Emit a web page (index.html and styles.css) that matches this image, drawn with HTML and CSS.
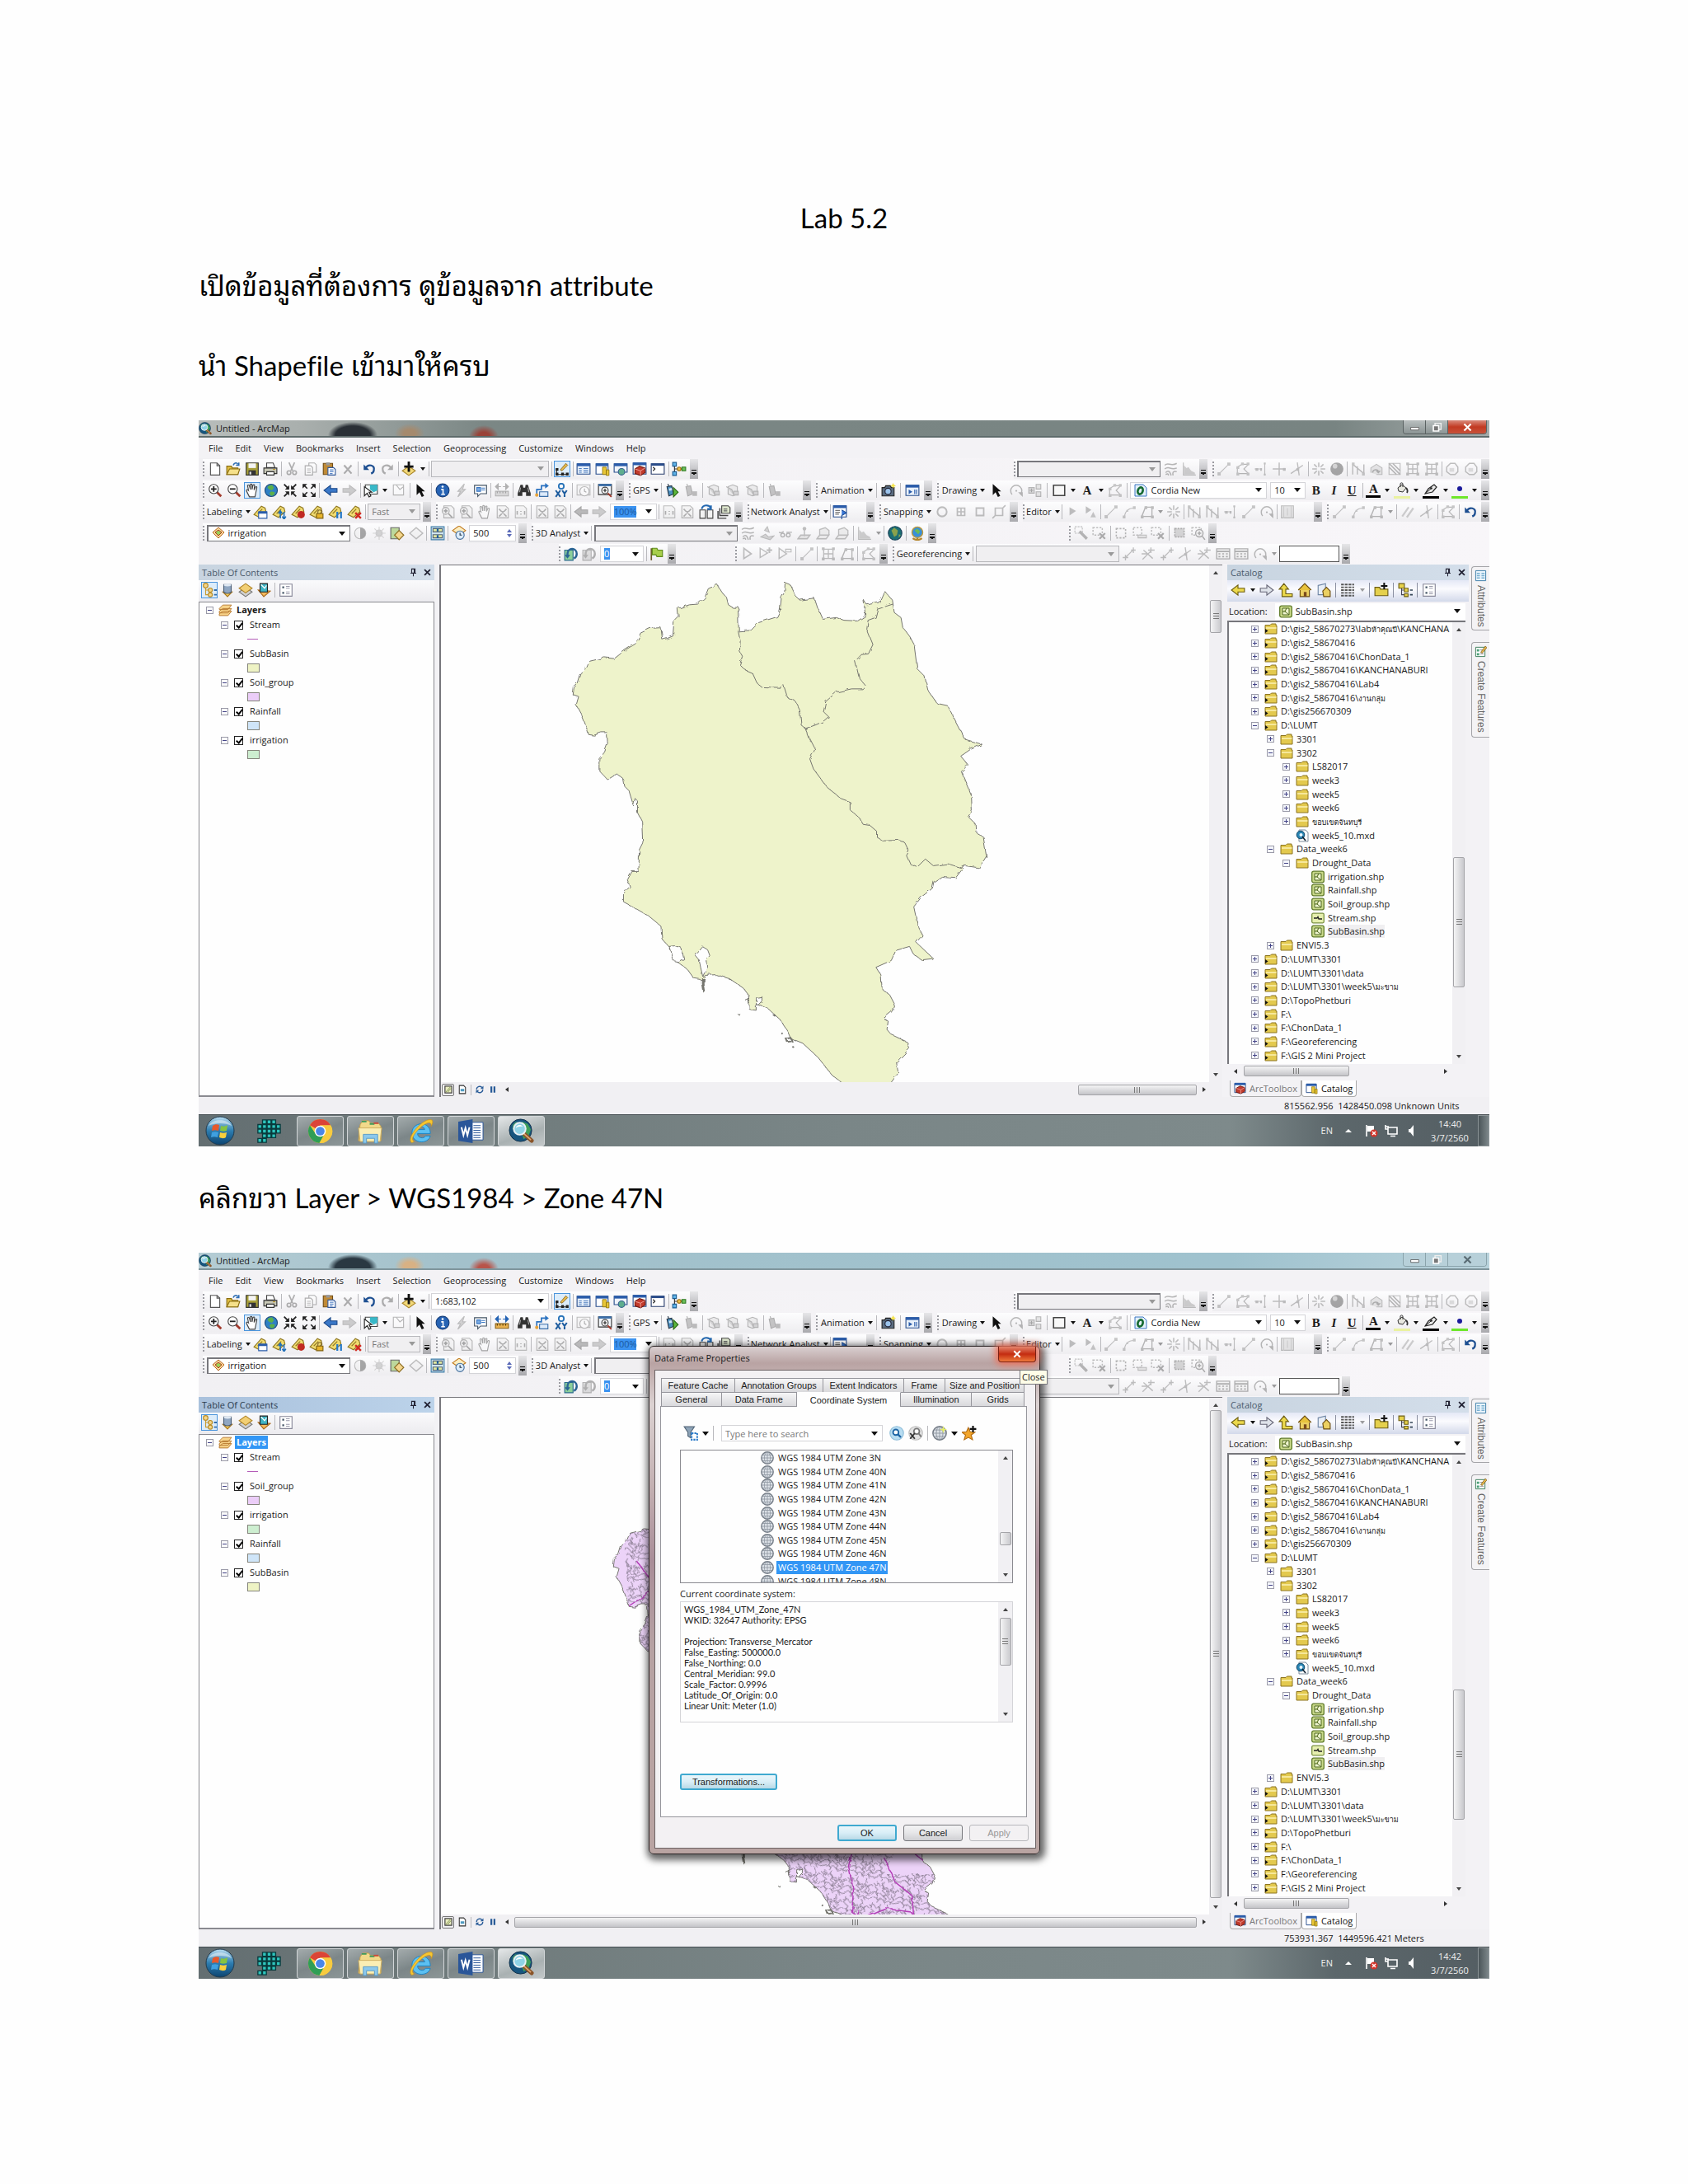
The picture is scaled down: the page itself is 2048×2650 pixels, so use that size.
FILE: index.html
```html
<!DOCTYPE html>
<html lang="th">
<head>
<meta charset="utf-8">
<title>Lab 5.2</title>
<link rel="stylesheet" href="styles.css">
</head>
<body>
<svg class="defs" aria-hidden="true">
<defs>
<filter id="rough" x="-5%" y="-5%" width="110%" height="110%"><feTurbulence type="fractalNoise" baseFrequency=".12" numOctaves="2" seed="4"/><feDisplacementMap in="SourceGraphic" scale="5"/></filter>
<linearGradient id="sky" x1="0" y1="0" x2="0" y2="1"><stop offset="0" stop-color="#b8dcf0"/><stop offset=".5" stop-color="#2d7db0"/><stop offset="1" stop-color="#0c4470"/></linearGradient>
<pattern id="soil" width="46" height="38" patternUnits="userSpaceOnUse" patternTransform="scale(.7) rotate(12)"><path d="M0 6l5 3 3-5 5 6 4-4 3 7 6-3 2 6 6-5 3 4 5-6 4 2M4 0l2 7-3 5 6 3-2 6 5 2-3 7 5 3-2 5M18 0l-2 6 5 4-4 6 6 3-2 7 6 2-3 6 2 4M32 0l3 8-5 3 6 6-3 5 6 4-5 6 3 6M0 22l6-2 4 5 5-4 7 5 3-5 6 6 5-4 4 4 6-4M0 32l8-3 5 4 6-3 7 5 6-4 8 3 6-2M40 10l-4 4 5 4-2 5M24 14l6 3-3 4z" fill="none" stroke="#85788c" stroke-width="1.300"/></pattern>
<path id="basin" d="M640 210L638 150 645 150 640 140 620 140 606 132 600 110 585 95 570 72 540 84 528 112 505 130 478 132 440 143 442 165 428 178 424 225 405 232 390 236 385 200 350 202 318 216 305 246 270 265 232 292 200 289 150 300 142 318 120 335 110 365 97 375 94 398 115 405 107 430 125 460 138 490 148 518 165 520 190 512 208 512 210 545 200 570 182 590 182 625 210 652 240 635 262 650 266 672 280 685 295 730 300 708 308 715 308 750 322 775 325 840 314 860 312 925 290 925 275 950 283 970 262 990 262 1015 300 1034 345 1058 385 1088 388 1125 410 1148 430 1188 470 1215 492 1243 520 1247 530 1234 565 1232 610 1244 655 1272 672 1292 675 1335 697 1338 697 1320 735 1332 775 1365 800 1400 810 1421 850 1436 900 1478 945 1530 985 1558 1000 1590 1100 1640 1180 1620 1140 1552 1163 1525 1157 1492 1200 1452 1192 1432 1140 1410 1126 1395 1130 1370 1115 1362 1142 1342 1150 1318 1135 1292 1110 1275 1107 1235 1090 1210 1140 1190 1155 1160 1200 1148 1212 1170 1240 1188 1278 1184 1222 1136 1242 1115 1228 1090 1214 1030 1240 1000 1275 975 1280 955 1305 940 1352 943 1382 908 1428 914 1452 880 1442 822 1420 810 1418 785 1392 762 1405 745 1403 700 1370 628 1392 608 1368 582 1400 562 1438 547 1382 532 1325 432 1290 425 1260 385 1250 345 1228 325 1218 255 1200 225 1178 200 1172 170 1150 155 1144 118 1117 90 1100 125 1060 132 1050 118 1055 165 1030 180 985 178 960 170 915 175 900 145 888 112 840 118 825 105 808 72 792 66 790 95 780 110 775 150 765 168 705 185 680 208Z"/>
<path id="basin-lines" d="M638 210L645 240 643 270 652 285 643 310 660 325 685 335 700 365 715 376 778 378 786 368 800 408 825 418 840 445 845 490 858 500M858 500L890 490 915 480 935 465 918 450 925 420 960 392 1010 382 1045 382 1055 372 1035 350 1022 300 1042 280 1065 278 1080 250 1060 205 1064 178 1088 170 1095 145 1145 130M858 500L872 530 890 562 873 590 885 620 930 675 975 708 1005 718 1005 742 1035 765 1048 785 1070 788 1092 805 1092 822 1112 834 1165 832 1185 840 1198 865 1190 878 1203 904 1225 912 1252 888 1278 908 1325 902 1370 914 1382 908"/>
<g id="coast"><path d="M412 1148L430 1146 452 1152 460 1185 440 1193 424 1190ZM522 1149L498 1175 510 1188 515 1210 522 1238 536 1210 533 1190 545 1175 538 1158ZM697 1320L698 1300 716 1297 716 1310 704 1322Z" fill="#fefefe"/><path d="M521 1240v18l4 24" stroke-width="3"/><path d="M638 1348l6 4M780 1406l4 2M796 1422l14-2 4 10-14 2ZM816 1446l4 2M662 1308l10-4 4 14M752 1350l8 5" stroke-width="2"/></g>
</defs>
<symbol id="i-new" viewBox="0 0 16 16"><path d="M3 1.5h7l3 3v10H3z" fill="#fff" stroke="#555"/><path d="M10 1.5v3h3" fill="none" stroke="#555"/></symbol>
<symbol id="i-open" viewBox="0 0 16 16"><path d="M1 14V5h5l1 2h6v7z" fill="#e2c044" stroke="#8a6d10"/><path d="M1 14l3-6h11l-2 6z" fill="#f5e08a" stroke="#8a6d10"/><path d="M8 4c1-3 4-3 5-1M14 1v3h-3" fill="none" stroke="#2c6db4" stroke-width="1.4"/></symbol>
<symbol id="i-save" viewBox="0 0 16 16"><path d="M1.500 1.500h13v13h-13z" fill="#a8a03a" stroke="#333"/><path d="M4 2h8v5H4z" fill="#f4f4f4"/><path d="M4 9.500h8v5H4z" fill="#333"/><path d="M5 11h2v3H5z" fill="#ddd"/></symbol>
<symbol id="i-print" viewBox="0 0 16 16"><path d="M4 1.500h7l2 5H4z" fill="#fff" stroke="#444"/><path d="M1 7h14v6H1z" fill="#c9c9b8" stroke="#333"/><path d="M4 11h8v3.500H4z" fill="#fff" stroke="#333"/><path d="M11 8.500h2" stroke="#b80"/></symbol>
<symbol id="i-cut" viewBox="0 0 16 16"><path d="M5 1l4 9M11 1L7 10" stroke="#555" stroke-width="1.500" fill="none"/><circle cx="5" cy="12" r="2" fill="none" stroke="#555" stroke-width="1.500"/><circle cx="11" cy="12" r="2" fill="none" stroke="#555" stroke-width="1.500"/></symbol>
<symbol id="i-copy" viewBox="0 0 16 16"><path d="M6 1.500h6l2 2v8H6z" fill="#fff" stroke="#555"/><path d="M2 4.500h6l2 2v8H2z" fill="#fff" stroke="#555"/><path d="M4 8h4M4 10h4M4 12h4" stroke="#777"/></symbol>
<symbol id="i-paste" viewBox="0 0 16 16"><path d="M2 2h10v12H2z" fill="#c08a35" stroke="#704c14"/><path d="M5 1h4v3H5z" fill="#999"/><path d="M7 6.500h6l2 2v6H7z" fill="#fff" stroke="#345a9a"/><path d="M9 9h4M9 11h4M9 13h3" stroke="#5a86c8"/></symbol>
<symbol id="i-del" viewBox="0 0 16 16"><path d="M4 4l8 9M12 4l-8 9" stroke="#555" stroke-width="2"/></symbol>
<symbol id="i-undo" viewBox="0 0 16 16"><path d="M4 7c3-5 10-3 9 2 0 2-1 3-3 4" fill="none" stroke="#1d4f91" stroke-width="2"/><path d="M2 3v6h6z" fill="#1d4f91"/></symbol>
<symbol id="i-redo" viewBox="0 0 16 16"><path d="M12 7C9 2 2 4 3 9c0 2 1 3 3 4" fill="none" stroke="#555" stroke-width="2"/><path d="M14 3v6H8z" fill="#555"/></symbol>
<symbol id="i-add" viewBox="0 0 16 16"><path d="M8 5l7 5-7 5-7-5z" fill="#f2d878" stroke="#a8852a"/><path d="M8 0v11M3 5.500h10" stroke="#111" stroke-width="2.500"/></symbol>
<symbol id="i-pencil" viewBox="0 0 16 16"><path d="M2 8v6h12" fill="none" stroke="#222"/><path d="M1 7h3v3H1zM1 12h3v3H1zM7 12h3v3H7zM12 12h3v3h-3z" fill="#222"/><path d="M6 9L12 2l2 2-6 6z" fill="#e6b94c" stroke="#7a5a14" stroke-width=".7"/></symbol>
<symbol id="i-tbl" viewBox="0 0 16 16"><path d="M1 2.500h14v11H1z" fill="#e6effa" stroke="#2a4f8d"/><path d="M1 2h14v3H1z" fill="#2a5caa"/><path d="M3 7.500h3M8 7.500h5M3 9.500h3M8 9.500h5M3 11.500h3M8 11.500h5" stroke="#4f7fc0"/></symbol>
<symbol id="i-cat" viewBox="0 0 16 16"><path d="M1 2.500h13v11H1z" fill="#fff" stroke="#2a4f8d"/><path d="M1 2h13v3H1z" fill="#2a5caa"/><path d="M8 6h4v8H8zM12 9h3v6h-3z" fill="#e8c637" stroke="#8a7008" stroke-width=".7"/></symbol>
<symbol id="i-srch" viewBox="0 0 16 16"><path d="M1 2.500h14v9H1z" fill="#f0f4fa" stroke="#2a4f8d"/><path d="M1 2h14v3H1z" fill="#2a5caa"/><circle cx="9" cy="11" r="3.500" fill="#5fae8e" stroke="#35618e"/></symbol>
<symbol id="i-tbx" viewBox="0 0 16 16"><path d="M1 1.500h14v12H1z" fill="#fff" stroke="#2a4f8d"/><path d="M1 1h14v3H1z" fill="#2a5caa"/><path d="M3 8l5-3 6 2v5l-5 3-6-2z" fill="#c23a2c" stroke="#701a12"/><path d="M3 8l6 2 5-3M9 10v5" fill="none" stroke="#f3a79f" stroke-width=".8"/></symbol>
<symbol id="i-py" viewBox="0 0 16 16"><path d="M1 2.500h14v11H1z" fill="#fff" stroke="#2a3f6d"/><path d="M1 2h14v2.500H1z" fill="#2a4c8a"/><path d="M3 6l2 2-2 2" fill="none" stroke="#222"/></symbol>
<symbol id="i-model" viewBox="0 0 16 16"><path d="M3 3v10M3 8h10" stroke="#333"/><path d="M1 1h4v4H1zM1 11h4v4H1z" fill="#5fb3e8" stroke="#1d5f93"/><circle cx="8" cy="8" r="2" fill="#f0c24b" stroke="#9a6c0c"/><path d="M11 6h4v4h-4z" fill="#6cc05a" stroke="#2f7a22"/></symbol>
<symbol id="i-zin" viewBox="0 0 16 16"><path d="M10 10l4.500 4.500" stroke="#a23a2c" stroke-width="2.500"/><circle cx="6.500" cy="6.500" r="5" fill="#fff" stroke="#444"/><path d="M6.500 3.500v6M3.500 6.500h6" stroke="#222" stroke-width="1.600"/></symbol>
<symbol id="i-zout" viewBox="0 0 16 16"><path d="M10 10l4.500 4.500" stroke="#a23a2c" stroke-width="2.500"/><circle cx="6.500" cy="6.500" r="5" fill="#fff" stroke="#444"/><path d="M3.500 6.500h6" stroke="#222" stroke-width="1.600"/></symbol>
<symbol id="i-hand" viewBox="0 0 16 16"><path d="M5 15L2 9c-1-2 1-2 2-1L3 3c0-1 1.500-1 2 0l1 4V2c0-1 1.600-1 1.800 0v5l1-4.500c.3-1 1.800-1 1.700 0L10 7.500l1.500-3c.6-1 1.700-.3 1.500.5L12 10l-1 5z" fill="#fff" stroke="#444"/></symbol>
<symbol id="i-globe" viewBox="0 0 16 16"><circle cx="8" cy="8" r="6.700" fill="#2f7fc4" stroke="#1c4a7c"/><path d="M5 3l4-1 2 3-2 3-3-1-2-2zM8 9l4 1-1 3-3 1-2-3z" fill="#5cb04a"/></symbol>
<symbol id="i-fin" viewBox="0 0 16 16"><path d="M7 7V2.500L2.500 7zM9 7V2.500L13.500 7zM7 9v4.500L2.500 9zM9 9v4.500L13.500 9z" fill="#222"/><path d="M1.500 1.500l4 4M14.500 1.500l-4 4M1.500 14.500l4-4M14.500 14.500l-4-4" stroke="#222" stroke-width="1.600"/></symbol>
<symbol id="i-fout" viewBox="0 0 16 16"><path d="M1 1h5L1 6zM15 1h-5l5 5zM1 15h5l-5-5zM15 15h-5l5-5z" fill="#222"/><path d="M2 2l4 4M14 2l-4 4M2 14l4-4M14 14l-4-4" stroke="#222" stroke-width="1.400"/></symbol>
<symbol id="i-back" viewBox="0 0 16 16"><path d="M1 8l7-5.500V6h7v4H8v3.500z" fill="#3a78c8" stroke="#1d4a8a"/></symbol>
<symbol id="i-fwd" viewBox="0 0 16 16"><path d="M15 8L8 2.500V6H1v4h7v3.500z" fill="#999" stroke="#777"/></symbol>
<symbol id="i-sel" viewBox="0 0 16 16"><path d="M2 2h13v10H2z" fill="#f4fafa" stroke="#444"/><path d="M7 2h8v6l-4 2-4-3z" fill="#38b8c8"/><path d="M1 4v10l3-3 2 4 2-1-2-4h3z" fill="#fff" stroke="#222"/></symbol>
<symbol id="i-clr" viewBox="0 0 16 16"><path d="M2 2h11v11H2z" fill="#fff" stroke="#666"/><path d="M5 2l4 5 4-3" fill="none" stroke="#666"/></symbol>
<symbol id="i-ptr" viewBox="0 0 16 16"><path d="M4 1v12l3-3 2.500 5 2.500-1-2.500-5H13z" fill="#111"/></symbol>
<symbol id="i-info" viewBox="0 0 16 16"><circle cx="8" cy="8" r="7" fill="#2663b4" stroke="#163f7c"/><path d="M6.500 7h2v5M6.500 12.200h4" stroke="#fff" stroke-width="1.400" fill="none"/><circle cx="8" cy="4" r="1.200" fill="#fff"/></symbol>
<symbol id="i-bolt" viewBox="0 0 16 16"><path d="M11 1L4 9h3l-3 6 8-8H9z" fill="#aaa" stroke="#777"/></symbol>
<symbol id="i-html" viewBox="0 0 16 16"><path d="M1.500 2.500h13v9H8l-3 3v-3H1.500z" fill="#fff" stroke="#456"/><path d="M4 5h4v4H4zM9 5.500h4M9 7.500h4" fill="#7faee4" stroke="#3b77c2"/></symbol>
<symbol id="i-meas" viewBox="0 0 16 16"><path d="M1 9h14v5H1z" fill="#e9b250" stroke="#8c6010"/><path d="M3 9v2M6 9v2M9 9v2M12 9v2" stroke="#553b08"/><path d="M1 4l3-3v6zM15 4l-3-3v6zM4 4h3M9 4h3" fill="#2463b4" stroke="#2463b4"/></symbol>
<symbol id="i-bino" viewBox="0 0 16 16"><path d="M4 2h2.500l.5 3h2l.5-3H12l3 9v3h-5v-4H6v4H1v-3z" fill="#333"/><path d="M4 5l-1 5M12 5l1 5" stroke="#aaa"/></symbol>
<symbol id="i-route" viewBox="0 0 16 16"><path d="M2 12V7h5V3h6" fill="none" stroke="#2b72c0" stroke-width="1.500"/><path d="M11 0l4 3-4 3z" fill="#2b72c0"/><path d="M5 9.500h9v5H5z" fill="#dceafa" stroke="#3b6ea8"/><circle cx="2" cy="13" r="1.800" fill="#e5a23a"/></symbol>
<symbol id="i-xy" viewBox="0 0 16 16"><circle cx="8" cy="3.500" r="2.800" fill="none" stroke="#2672b8" stroke-width="1.600"/><path d="M2 8l5 7M7 8l-5 7M9 8l2.500 3.500L14 8M11.500 11v4" fill="none" stroke="#1d5c9e" stroke-width="1.800"/></symbol>
<symbol id="i-time" viewBox="0 0 16 16"><path d="M1 2h14v11H1z" fill="#eee" stroke="#777"/><circle cx="9" cy="9" r="5" fill="#fff" stroke="#666"/><path d="M9 6v3l2 1" stroke="#555" fill="none"/></symbol>
<symbol id="i-viewer" viewBox="0 0 16 16"><path d="M1 1.500h14v11H1z" fill="#f4f8fc" stroke="#333"/><path d="M1 1h14v2.500H1z" fill="#3b6ea8"/><circle cx="8" cy="8" r="3.500" fill="#fff" stroke="#444"/><path d="M8 6v4M6 8h4" stroke="#222"/><path d="M11 11l4 4" stroke="#a23a2c" stroke-width="1.800"/></symbol>
<symbol id="i-gps" viewBox="0 0 16 16"><path d="M3 1l1 3M2 4l5-1 2 9-5 2z" fill="#4b8fc0" stroke="#234"/><path d="M4 6l3-.6.5 2.500-3 .6z" fill="#cfe8f6"/><path d="M9 5l5 5-5 5z" fill="#5db83c" stroke="#2b6a14"/></symbol>
<symbol id="i-gps2" viewBox="0 0 16 16"><path d="M3 1l1 3M2 4l5-1 2 9-5 2z" fill="#888" stroke="#555"/><path d="M9 9h5v5H9z" fill="#777"/></symbol>
<symbol id="i-box" viewBox="0 0 16 16"><path d="M3 4l5-2 5 2v8l-5 2-5-2z" fill="#ddd" stroke="#666"/><path d="M1 4l6 3 2 6M9 9h5v4H9z" fill="#aaa" stroke="#666"/></symbol>
<symbol id="i-cam" viewBox="0 0 16 16"><path d="M1 5h3l1-2h5l1 2h3v9H1z" fill="#5a6c80" stroke="#222"/><circle cx="7.500" cy="9" r="3.300" fill="#9cc4ec" stroke="#223"/><path d="M13 0l1 2 2 1-2 1-1 2-1-2-2-1 2-1z" fill="#f3e34a"/></symbol>
<symbol id="i-anim" viewBox="0 0 16 16"><path d="M1 2.500h14v11H1z" fill="#e9f1fa" stroke="#2a4f8d"/><path d="M1 2h14v3H1z" fill="#2a5caa"/><path d="M4 7l4 2.500L4 12zM10 7h1v5h-1zM12 7h1v5h-1z" fill="#2a5caa"/></symbol>
<symbol id="i-rot" viewBox="0 0 16 16"><path d="M3.500 12.500a6 6 0 1 1 9 0" fill="none" stroke="#666" stroke-width="1.300"/><path d="M10 10h5v5z" fill="#666"/><circle cx="8" cy="8.500" r="1" fill="#666"/></symbol>
<symbol id="i-group" viewBox="0 0 16 16"><path d="M1 5h6v6H1z" fill="#bbb" stroke="#666"/><path d="M9 1.500h5v5H9zM9 9.500h5v5H9z" fill="#ccc" stroke="#666"/><path d="M2 8h4M4 6v4" stroke="#444"/></symbol>
<symbol id="i-rect" viewBox="0 0 16 16"><path d="M2 2.500h12v11H2z" fill="#f8f8f8" stroke="#444" stroke-width="1.400"/></symbol>
<symbol id="i-poly" viewBox="0 0 16 16"><path d="M2 13l4-10h7v10z" fill="none" stroke="#666" stroke-width="1.200"/><path d="M1 12h3v3H1zM5 2h3v3H5zM12 2h3v3h-3zM12 12h3v3h-3z" fill="#777"/></symbol>
<symbol id="i-nodes" viewBox="0 0 16 16"><path d="M2 13V6l5-3h7l-5 5 5 5z" fill="none" stroke="#666"/><path d="M1 5h3v3H1zM6 1h3v3H6zM12 1h3v3h-3zM1 12h3v3H1zM12 12h3v3h-3z" fill="#888"/></symbol>
<symbol id="i-font" viewBox="0 0 16 16"><path d="M1 1h10l4 4v10H1z" fill="#e4f0fa" stroke="#3b77c2"/><ellipse cx="7.500" cy="8.500" rx="3" ry="4.200" transform="rotate(20 7.500 8.500)" fill="none" stroke="#156a30" stroke-width="2.600"/></symbol>
<symbol id="i-tag" viewBox="0 0 16 16"><path d="M1 11l8-9 4 2 1 4-7 6z" fill="#f1dc72" stroke="#8f7722"/><path d="M5 10l5-5" stroke="#8f7722"/></symbol>
<symbol id="i-tag1" viewBox="0 0 16 16"><use href="#i-tag"/><path d="M6 8h9v7H6z" fill="#fff" stroke="#2a5caa"/><path d="M6 7.500h9V10H6z" fill="#2a5caa"/></symbol>
<symbol id="i-tag2" viewBox="0 0 16 16"><use href="#i-tag"/><path d="M9 15V8M7 10l2-3 2 3M13 8v7M11 13l2 3 2-3" stroke="#2270b8" stroke-width="1.400" fill="none"/></symbol>
<symbol id="i-tag3" viewBox="0 0 16 16"><use href="#i-tag"/><circle cx="11" cy="11" r="4" fill="#c02a22"/></symbol>
<symbol id="i-tag4" viewBox="0 0 16 16"><use href="#i-tag"/><path d="M8 10h7v5H8z" fill="#e8b52c" stroke="#80600c"/><path d="M9.500 10V8a2 2 0 0 1 4 0v2" fill="none" stroke="#806830"/></symbol>
<symbol id="i-tag5" viewBox="0 0 16 16"><use href="#i-tag"/><path d="M9 8h2v7H9zM13 8h2v7h-2z" fill="#2478c8"/></symbol>
<symbol id="i-tag6" viewBox="0 0 16 16"><use href="#i-tag"/><path d="M9 9l6 6M15 9l-6 6" stroke="#d22a20" stroke-width="2.200"/></symbol>
<symbol id="i-page" viewBox="0 0 16 16"><path d="M4 1.500h8l3 3v10H4z" fill="#eee" stroke="#666"/><circle cx="6" cy="7" r="3.800" fill="#ddd" stroke="#555"/><path d="M4 7h4M6 5v4M9 10l4 4" stroke="#444" stroke-width="1.500"/></symbol>
<symbol id="i-page2" viewBox="0 0 16 16"><path d="M2 1.500h9l3 3v10H2z" fill="#eee" stroke="#666"/><path d="M4 5l3 3M12 5L9 8M4 13l3-3M12 13l-3-3M8 7v3" stroke="#555" stroke-width="1.400"/></symbol>
<symbol id="i-page3" viewBox="0 0 16 16"><path d="M2 1.500h9l3 3v10H2z" fill="#eee" stroke="#777"/><path d="M4 7v4M12 7v4M8 7v1M8 10v1" stroke="#555" stroke-width="1.400"/></symbol>
<symbol id="i-swap" viewBox="0 0 16 16"><path d="M1 6h6v9H1zM9 6h6v9H9z" fill="#f2f2f2" stroke="#444"/><path d="M3 5c1-5 8-5 10-1M13 1v4h-4" fill="none" stroke="#2468b0" stroke-width="1.800"/></symbol>
<symbol id="i-stack" viewBox="0 0 16 16"><path d="M5 1.500h7l2 2v6H5z" fill="#dfe8cf" stroke="#444"/><path d="M3 4v8h9M1 7v8h9" fill="none" stroke="#444" stroke-width="1.300"/><path d="M7 5h4M7 7h4" stroke="#666"/></symbol>
<symbol id="i-na" viewBox="0 0 16 16"><path d="M1 1.500h14v12H1z" fill="#fff" stroke="#2a4f8d"/><path d="M1 1h14v3H1z" fill="#2a5caa"/><path d="M3 6.500h5M3 8.500h5M3 10.500h4" stroke="#777"/><path d="M10 6l5 3-5 3v4" fill="#3a78d8" stroke="#1d4f9a"/></symbol>
<symbol id="i-circ" viewBox="0 0 16 16"><circle cx="8" cy="8" r="5" fill="none" stroke="#777" stroke-width="1.800"/></symbol>
<symbol id="i-plusbox" viewBox="0 0 16 16"><path d="M4 4h8v8H4zM8 4v8M4 8h8" fill="none" stroke="#777" stroke-width="1.500"/></symbol>
<symbol id="i-sq" viewBox="0 0 16 16"><path d="M4 4h8v8H4z" fill="none" stroke="#777" stroke-width="1.600"/></symbol>
<symbol id="i-edge" viewBox="0 0 16 16"><path d="M4 4h8v8H4zM1 15l3-3M12 4l3-3" fill="none" stroke="#777" stroke-width="1.500"/></symbol>
<symbol id="i-play" viewBox="0 0 16 16"><path d="M5 3v9l7-5z" fill="#777"/></symbol>
<symbol id="i-play2" viewBox="0 0 16 16"><path d="M3 2v8l6-4z" fill="#777"/><path d="M8 14l3-6 3 6z" fill="#888"/></symbol>
<symbol id="i-line" viewBox="0 0 16 16"><path d="M3 13L13 3" stroke="#777"/><path d="M1 11.500h3.500V15H1zM11.500 1H15v3.500h-3.500z" fill="#888"/></symbol>
<symbol id="i-arc" viewBox="0 0 16 16"><path d="M3 14C3 8 7 4 13 4" fill="none" stroke="#777"/><path d="M1 12h3v3H1zM12 2h3v3h-3zM5 6h2v2H5z" fill="#888"/></symbol>
<symbol id="i-mid" viewBox="0 0 16 16"><path d="M1 8h8M12 2v12" stroke="#777"/><path d="M2 7h3v3H2zM7 7h2v3H7zM11 1h2v2h-2zM11 13h2v2h-2z" fill="#777"/></symbol>
<symbol id="i-cross" viewBox="0 0 16 16"><path d="M8 1v14M1 8h14" stroke="#777" stroke-width="1.300"/><path d="M12 7h3v3h-3z" fill="#777"/></symbol>
<symbol id="i-tan" viewBox="0 0 16 16"><path d="M1 13L14 4M8 1l2 14" stroke="#777" stroke-width="1.200"/><path d="M7 7h3v3H7z" fill="#777"/></symbol>
<symbol id="i-spark" viewBox="0 0 16 16"><path d="M8 1v5M8 10v5M1 8h5M10 8h5M3 3l3 3M13 3l-3 3M3 13l3-3M13 13l-3-3" stroke="#777" stroke-width="1.400"/></symbol>
<symbol id="i-ball" viewBox="0 0 16 16"><circle cx="8" cy="8" r="7" fill="#444"/><circle cx="6" cy="5" r="2.500" fill="#aaa"/></symbol>
<symbol id="i-split" viewBox="0 0 16 16"><path d="M2 3v11M2 3l12 10M7 5v9M14 3v10" stroke="#777" fill="none" stroke-width="1.300"/><path d="M1 1h3v3H1zM12 12h3v3h-3z" fill="#888"/></symbol>
<symbol id="i-frames" viewBox="0 0 16 16"><path d="M3 3h10v10H3zM3 8h10M8 3v10" fill="none" stroke="#777" stroke-width="1.200"/><path d="M1 1h3v3H1zM12 1h3v3h-3zM1 12h3v3H1zM12 12h3v3h-3z" fill="#777"/></symbol>
<symbol id="i-flip" viewBox="0 0 16 16"><path d="M2 12V7l6-4 6 4v7H8" fill="#ccc" stroke="#777"/><path d="M4 12c0-4 6-4 6-1M8 10l2 2 2-2" fill="none" stroke="#555" stroke-width="1.400"/></symbol>
<symbol id="i-hatch" viewBox="0 0 16 16"><path d="M2 2h12v12H2z" fill="none" stroke="#777"/><path d="M2 6l8 8M2 2l12 12M6 2l8 8" stroke="#666" stroke-width="1.500"/></symbol>
<symbol id="i-hex" viewBox="0 0 16 16"><path d="M2 6l4-4h5l3 4v5l-3 3H6l-4-3z" fill="none" stroke="#777" stroke-width="1.300"/><path d="M5 7h5v4H5z" fill="#bbb"/></symbol>
<symbol id="i-sheet" viewBox="0 0 16 16"><path d="M1.500 1.500h13v13h-13z" fill="#ccc" stroke="#777"/><path d="M4 1v14M8 4v8M12 1v14" stroke="#999"/></symbol>
<symbol id="i-contour" viewBox="0 0 16 16"><path d="M1 4c4-4 6 2 13-2M1 8c5-4 6 2 13-1M2 12c4-4 5 1 6 3M10 15c-1-4 1-5 4-4M5 15c0-2-1-2-3-1" fill="none" stroke="#666" stroke-width="1.300"/></symbol>
<symbol id="i-hist" viewBox="0 0 16 16"><path d="M1.500 1v13.500H15" fill="none" stroke="#777"/><path d="M2 14V4l3 3 2-1 3 4 4 2v2z" fill="#999"/></symbol>
<symbol id="i-slope" viewBox="0 0 16 16"><path d="M1 12l5-3 3 3 6-1-4 4zM8 1l-3 4 5 2z" fill="#aaa" stroke="#777"/></symbol>
<symbol id="i-glass" viewBox="0 0 16 16"><path d="M1 7c2 1 3 1 5-1M15 7H9" stroke="#666" fill="none"/><circle cx="5" cy="10" r="2" fill="none" stroke="#666" stroke-width="1.300"/><circle cx="11" cy="10" r="2" fill="none" stroke="#666" stroke-width="1.300"/></symbol>
<symbol id="i-pin3" viewBox="0 0 16 16"><path d="M1 14l3-4h10l-3 4zM8 2v9" fill="#ccc" stroke="#777" stroke-width="1.300"/><circle cx="8" cy="3" r="2" fill="#777"/></symbol>
<symbol id="i-poly3" viewBox="0 0 16 16"><path d="M1 14l3-4h10l-3 4zM4 10V4l6-2 4 3v5" fill="#ddd" stroke="#777" stroke-width="1.200"/></symbol>
<symbol id="i-earth" viewBox="0 0 16 16"><circle cx="8" cy="8" r="7.300" fill="#1d6f74" stroke="#123c54"/><path d="M4 5l3-3 4 3-1 5-3 2zM12 9l2 1-2 3z" fill="#8aa24c"/></symbol>
<symbol id="i-earth2" viewBox="0 0 16 16"><path d="M3 13.500c3 2 7 2 10 0M8 13v2" fill="none" stroke="#b5852a" stroke-width="2"/><circle cx="8" cy="7" r="5.800" fill="#3a8fd8" stroke="#c09a3a" stroke-width="1.200"/><path d="M5 5l3-2 3 3-2 3z" fill="#6cbb56"/></symbol>
<symbol id="i-wrench" viewBox="0 0 16 16"><path d="M1 1h8v7H1z" fill="none" stroke="#777" stroke-dasharray="2 1"/><path d="M6 6l8 8" stroke="#666" stroke-width="3"/></symbol>
<symbol id="i-dash" viewBox="0 0 16 16"><path d="M3 3h10v10H3z" fill="none" stroke="#666" stroke-width="1.400" stroke-dasharray="2 1.500"/></symbol>
<symbol id="i-dashx" viewBox="0 0 16 16"><path d="M1 2h10v8H1z" fill="none" stroke="#777" stroke-width="1.300" stroke-dasharray="2 1.500"/><path d="M8 8l6 6M14 8l-6 6" stroke="#555" stroke-width="2"/></symbol>
<symbol id="i-dashm" viewBox="0 0 16 16"><path d="M1 2h9v8H1z" fill="none" stroke="#777" stroke-width="1.300" stroke-dasharray="2 1.500"/><path d="M6 10h9v3H6z" fill="#ccc" stroke="#777"/></symbol>
<symbol id="i-dashf" viewBox="0 0 16 16"><path d="M3 3h10v9H3z" fill="#aaa" stroke="#555" stroke-width="1.400" stroke-dasharray="2 1"/></symbol>
<symbol id="i-dashz" viewBox="0 0 16 16"><path d="M1 2h10v8H1z" fill="none" stroke="#777" stroke-width="1.300" stroke-dasharray="2 1.500"/><circle cx="9" cy="8" r="4" fill="#eee" stroke="#555" stroke-width="1.300"/><path d="M9 6v4M7 8h4M12 11l3 4" stroke="#555" stroke-width="1.400"/></symbol>
<symbol id="i-addpt" viewBox="0 0 16 16"><path d="M4 12l9-9M1 12h6M4 9v6M10 4h5M12.500 1v6" stroke="#777" stroke-width="1.200"/></symbol>
<symbol id="i-wand" viewBox="0 0 16 16"><path d="M2 14l9-9M3 4l10 9M1 8h7M11 1v6M8 4h7" stroke="#777" stroke-width="1.200"/></symbol>
<symbol id="i-tab" viewBox="0 0 16 16"><path d="M1 2.500h14v11H1z" fill="#eee" stroke="#555" stroke-width="1.200"/><path d="M1 5.500h14M3 8h2M7 8h2M11 8h2M3 11h2M7 11h2M11 11h2" stroke="#555" stroke-width="1.500"/></symbol>
<symbol id="i-cont" viewBox="0 0 16 16"><circle cx="8" cy="8" r="6" fill="#eee" stroke="#777"/><path d="M8 2a6 6 0 0 1 0 12z" fill="#444"/></symbol>
<symbol id="i-sun" viewBox="0 0 16 16"><circle cx="8" cy="8" r="4" fill="#999"/><path d="M8 1v14M1 8h14M3 3l10 10M13 3L3 13" stroke="#aaa"/></symbol>
<symbol id="i-swipe" viewBox="0 0 16 16"><path d="M1 2h9v12H1z" fill="#bcd89c" stroke="#666"/><path d="M10 5l5 5-5 5-5-5z" fill="#f3d58c" stroke="#8c6c20"/></symbol>
<symbol id="i-dia" viewBox="0 0 16 16"><path d="M8 2l7 6-7 6-7-6z" fill="#eee" stroke="#777" stroke-width="1.300"/></symbol>
<symbol id="i-lay" viewBox="0 0 16 16"><path d="M8 1l7 6-7 7-7-7z" fill="#f7e0a0" stroke="#b8601c"/><path d="M8 4l4 3-4 4-4-4z" fill="#9ccf58" stroke="#b8321c"/></symbol>
<symbol id="i-flick" viewBox="0 0 16 16"><path d="M1 1h14v14H1z" fill="#cfe6f0" stroke="#3f7da8"/><path d="M3 3h10v3.500H3zM3 9.500h10V13H3z" fill="#dfe7a0" stroke="#567"/><path d="M8 3v3M8 10v3" stroke="#1d5c9e" stroke-width="2"/></symbol>
<symbol id="i-timer" viewBox="0 0 16 16"><path d="M8 0l7 5-7 5-7-5z" fill="#fdeec0" stroke="#c07a20"/><circle cx="9" cy="10" r="4.500" fill="#dcecfa" stroke="#456f9c"/><path d="M9 7.500V10h2" fill="none" stroke="#234"/></symbol>
<symbol id="i-tree" viewBox="0 0 16 16"><path d="M4 4v9h4M4 8h4" fill="none" stroke="#c89b30"/><circle cx="4" cy="3" r="2.500" fill="#f3d58c" stroke="#b88a20"/><circle cx="9" cy="8" r="2.200" fill="#f3d58c" stroke="#b88a20"/><circle cx="9" cy="13" r="2.200" fill="#f3d58c" stroke="#b88a20"/><path d="M13 8h3M13 13h3" stroke="#346ca8" stroke-width="1.600"/></symbol>
<symbol id="i-src" viewBox="0 0 16 16"><path d="M3 10l5 5 5-5z" fill="#f2c95c" stroke="#a8761c"/><path d="M4 2h8v8c-2 2-6 2-8 0z" fill="#8fa6c2" stroke="#4a5c74"/><ellipse cx="8" cy="2.500" rx="4" ry="1.500" fill="#dfe8f2"/></symbol>
<symbol id="i-bucket" viewBox="0 0 16 16"><path d="M3 7l5-4 5 4-4 5-5-1z" fill="#e8e8e0" stroke="#333"/><path d="M6 6V2c0-1.500 3-1.500 3 0v4" fill="none" stroke="#333"/><path d="M13 7c2 2 2 4 1 6" fill="none" stroke="#333" stroke-width="1.800"/></symbol>
<symbol id="i-nib" viewBox="0 0 16 16"><path d="M1 14l4-6 7-5 3 3-5 6z" fill="#e8e8e8" stroke="#222" stroke-width="1.200"/><path d="M1 14l7-6" stroke="#222"/><circle cx="8.500" cy="7.500" r="1.300" fill="#222"/></symbol>
<symbol id="i-vis" viewBox="0 0 16 16"><path d="M8 5l7 5-7 5-7-5z" fill="#d0d0d0" stroke="#777"/><path d="M8 1l7 5-7 5-7-5z" fill="#f2cf74" stroke="#b08426"/></symbol>
<symbol id="i-selv" viewBox="0 0 16 16"><path d="M2 8l6 7 7-6z" fill="#f2b85c" stroke="#a86a1c"/><path d="M4 1h8v9H4z" fill="#3fb4c4" stroke="#222"/><path d="M5 2l4 4 2-3" stroke="#fff" fill="none"/></symbol>
<symbol id="i-opts" viewBox="0 0 16 16"><path d="M1.500 1.500h13v13h-13z" fill="#fff" stroke="#889"/><path d="M4 5h2M4 11h2" stroke="#456" stroke-width="2"/><path d="M8 4h4M8 6h4M8 10h4M8 12h4" stroke="#99a"/></symbol>
<symbol id="i-layers" viewBox="0 0 16 16"><path d="M1 12l4-3h10l-4 5H1zM1 9l4-3h10l-4 5H1zM1 6l4-4h10l-4 5H1z" fill="#f8d48a" stroke="#b87a30" stroke-width=".9"/></symbol>
<symbol id="i-yback" viewBox="0 0 16 16"><path d="M1 8l7-5.500V6h7v4H8v3.500z" fill="#ecd94c" stroke="#6b5c10"/></symbol>
<symbol id="i-gfwd" viewBox="0 0 16 16"><path d="M15 8L8 2.500V6H1v4h7v3.500z" fill="#dfe3ea" stroke="#667"/></symbol>
<symbol id="i-up" viewBox="0 0 16 16"><path d="M6 1l5 6H8v5h7v3H4V7H1z" fill="#ecd94c" stroke="#6b5c10"/></symbol>
<symbol id="i-home" viewBox="0 0 16 16"><path d="M3 7h10v8H3z" fill="#ecd061" stroke="#6b4c10"/><path d="M1 8l7-7 7 7" fill="#e8c23c" stroke="#6b4c10"/><path d="M7 10h3v5H7z" fill="#7a4a1c"/></symbol>
<symbol id="i-dbh" viewBox="0 0 16 16"><path d="M2 3l8-2v12H2z" fill="#e8eef6" stroke="#6f86a5"/><path d="M7 9l4-4 4 4v6H8z" fill="#ecd061" stroke="#6b4c10"/></symbol>
<symbol id="i-grid" viewBox="0 0 16 16"><path d="M1 2h14M1 5h14M1 8h14M1 11h14M1 14h14" stroke="#555" stroke-width="1.600" stroke-dasharray="3 1"/></symbol>
<symbol id="i-conn" viewBox="0 0 16 16"><path d="M1 14V5h5l1 2h8v7z" fill="#e5d04c" stroke="#6b5c10"/><path d="M11 0v7M7.500 3.500h7" stroke="#111" stroke-width="1.800"/></symbol>
<symbol id="i-ctree" viewBox="0 0 16 16"><path d="M4 5v8h4M4 8h4" fill="none" stroke="#445"/><path d="M1 1h6v5H1zM7 6h4v4H7zM7 12h4v3H7z" fill="#e8d34c" stroke="#6b5c10"/><path d="M13 8h3M13 13h3" stroke="#345" stroke-width="1.400"/></symbol>
<symbol id="i-shp" viewBox="0 0 16 16"><rect x=".7" y="1.200" width="14.600" height="13.600" rx="2" fill="#c9d98a" stroke="#5f7a28" stroke-width="1.300"/><path d="M4 4h8v8H4zM4 8l3 0 2-4M7 8l5 4" fill="#eef4cf" stroke="#4f6820"/></symbol>
<symbol id="i-shl" viewBox="0 0 16 16"><rect x=".7" y="2.200" width="14.600" height="11.600" rx="1.500" fill="#e6efae" stroke="#7a9140" stroke-width="1.300"/><path d="M3 8h4l1-1.500 1 2.500h4" fill="none" stroke="#222" stroke-width="1.300"/></symbol>
<symbol id="i-fold" viewBox="0 0 16 16"><path d="M1 14V3.500h6l1.500-1.500H14v2l1 0v10z" fill="#e3c94e" stroke="#8c7420"/><path d="M2 7h12.500" stroke="#fbf0b0" stroke-width="1.600"/></symbol>
<symbol id="i-foldc" viewBox="0 0 16 16"><use href="#i-fold"/><path d="M1 8l3.500 2.500L1 13z" fill="#111"/></symbol>
<symbol id="i-mxd" viewBox="0 0 16 16"><path d="M4 1h8l3 3v11H4z" fill="#fff" stroke="#7a8a9a"/><circle cx="6" cy="7" r="4.800" fill="#2a86b4" stroke="#0e4668"/><circle cx="6.500" cy="7" r="2" fill="#e8f6ff"/><path d="M8 9l4 5" stroke="#123" stroke-width="1.600"/></symbol>
<symbol id="i-attr" viewBox="0 0 16 16"><path d="M1.500 1.500h13v13h-13z" fill="#eaf4fc" stroke="#3a7ca8"/><path d="M3 5h4M9 5h4M3 8h4M9 8h4M3 11h4M9 11h4" stroke="#7ab0d0" stroke-width="1.500"/></symbol>
<symbol id="i-cre" viewBox="0 0 16 16"><path d="M1.500 2.500h12v12h-12z" fill="#fff" stroke="#3a7c58"/><path d="M3 5h3v3H3zM3 10h3v3H3z" fill="#4aa078"/><path d="M7 6h5M7 11h5" stroke="#888"/><path d="M8 9l6-8 2 2-6 7z" fill="#e8b84c" stroke="#6a4a10" stroke-width=".7"/></symbol>
<symbol id="i-app" viewBox="0 0 32 32"><circle cx="15" cy="15" r="14" fill="#17557f" stroke="#0d2e48"/><path d="M17 4l7 3 4 7-3 8-6 4-3-8 3-6z" fill="#3f9e5a"/><path d="M5 8l4-4 3 2-3 6-4 2z" fill="#3f8e6a"/><path d="M19 19l10 9" stroke="#8a5428" stroke-width="5" stroke-linecap="round"/><path d="M19 19l9 8" stroke="#e0a878" stroke-width="1.500"/><circle cx="14" cy="13" r="7.500" fill="#8fd2e6" stroke="#e8f0f4" stroke-width="2"/><path d="M9 12c1-4 6-5 9-2-3 0-6 0-9 2z" fill="#fff"/></symbol>
<symbol id="i-ref" viewBox="0 0 16 16"><path d="M1 4h9v11H1z" fill="#8ccf9a" stroke="#2a6c8a"/><path d="M4 10V8c0-7 10-7 10 0 0 2-1 4-3 5" fill="none" stroke="#2a6494" stroke-width="2.200"/><path d="M1 9h6l-3 4z" fill="#2a6494"/></symbol>
<symbol id="i-flag" viewBox="0 0 16 16"><path d="M2 2v13" stroke="#6c5a2a" stroke-width="1.500"/><path d="M3 2h5l1 2h5v7H8L7 9H3z" fill="#a8cf4c" stroke="#5d8a18"/></symbol>
<symbol id="i-tri" viewBox="0 0 16 16"><path d="M4 2v11l8-5z" fill="none" stroke="#777" stroke-width="1.500"/></symbol>
<symbol id="i-tplus" viewBox="0 0 16 16"><path d="M2 2v10l8-5z" fill="none" stroke="#777" stroke-width="1.300"/><path d="M12 1v6M9 4h6" stroke="#777" stroke-width="1.800"/></symbol>
<symbol id="i-tminus" viewBox="0 0 16 16"><path d="M2 2v11l8-5z" fill="none" stroke="#777" stroke-width="1.300"/><path d="M9 3h6v3H9z" fill="#eee" stroke="#777"/></symbol>
<symbol id="i-par" viewBox="0 0 16 16"><path d="M2 13L9 3M7 14l7-10" stroke="#999" stroke-width="2"/></symbol>
<symbol id="i-filter" viewBox="0 0 16 16"><path d="M1 1h11L8 7v6l-3-2V7z" fill="#8ea4b8" stroke="#56697c"/><path d="M9 8h6v7H9z" fill="none" stroke="#2a7ac8" stroke-width="1.800" stroke-dasharray="2 1"/></symbol>
<symbol id="i-find" viewBox="0 0 16 16"><circle cx="8" cy="8" r="7.300" fill="#b8ddf2" stroke="#8cbcd8"/><circle cx="7" cy="7" r="3" fill="#fff" stroke="#1c64a4" stroke-width="1.600"/><path d="M9 9l3.500 3.500" stroke="#1c64a4" stroke-width="2"/></symbol>
<symbol id="i-findx" viewBox="0 0 16 16"><circle cx="8" cy="8" r="7.300" fill="#e2e2e2" stroke="#bbb"/><circle cx="9" cy="6" r="3" fill="#fff" stroke="#777" stroke-width="1.600"/><path d="M11 8l3 4" stroke="#777" stroke-width="1.800"/><path d="M2 8l5 6M7 8l-5 6" stroke="#333" stroke-width="1.700"/></symbol>
<symbol id="i-wgs" viewBox="0 0 16 16"><circle cx="8" cy="8" r="7.200" fill="#dde2e8" stroke="#747c86" stroke-width="1.400"/><path d="M8 1v14M1 8h14M2.500 4.500h11M2.500 11.500h11" stroke="#8d959f" fill="none" stroke-width=".8"/><ellipse cx="8" cy="8" rx="3.600" ry="7" fill="none" stroke="#8d959f" stroke-width=".8"/></symbol>
<symbol id="i-wgsn" viewBox="0 0 16 16"><use href="#i-wgs"/><path d="M12 0l1 3 3 1-3 1-1 3-1-3-3-1 3-1z" fill="#e4ec6a"/></symbol>
<symbol id="i-star" viewBox="0 0 16 16"><path d="M7 2l2 4.500 5 .5-4 3 1.500 5L7 12.500 2.500 15 4 10 0 7l5-.5z" fill="#f3a62c" stroke="#b26a10"/><path d="M12 0v7M8.500 3.500h7" stroke="#111" stroke-width="1.900"/></symbol>
<symbol id="i-pin" viewBox="0 0 16 16"><path d="M5 2h6v7H5zM3 9.500h10M8 10v5" fill="none" stroke="currentColor" stroke-width="1.500"/><path d="M10 2v7" stroke="currentColor" stroke-width="2.400"/></symbol>
<symbol id="i-x" viewBox="0 0 16 16"><path d="M3 3l10 10M13 3L3 13" stroke="currentColor" stroke-width="2.600"/></symbol>
<symbol id="i-min" viewBox="0 0 16 16"><path d="M2 8h12v4H2z" fill="#fff" stroke="#555" stroke-width="1"/></symbol>
<symbol id="i-max" viewBox="0 0 16 16"><path d="M5 2h9v9H5z" fill="none" stroke="#eee" stroke-width="1.800"/><path d="M2.500 5.500h8v8h-8z" fill="#777" stroke="#fff" stroke-width="2"/></symbol>
<symbol id="i-refresh" viewBox="0 0 16 16"><path d="M3 8a5 5 0 0 1 9-3M13 8a5 5 0 0 1-9 3" fill="none" stroke="#2a5c98" stroke-width="1.800"/><path d="M14 2v5H9zM2 14V9h5z" fill="#2a5c98"/></symbol>
<symbol id="i-pause" viewBox="0 0 16 16"><path d="M4 3h3v10H4zM9 3h3v10H9z" fill="#2a5c98"/></symbol>
<symbol id="i-dv" viewBox="0 0 16 16"><path d="M2.500 2.500h11v11h-11z" fill="#e8ecc0" stroke="#444" stroke-width="1.600"/><path d="M4 12l7-8M7 12l5-6" stroke="#667a30"/></symbol>
<symbol id="i-lv" viewBox="0 0 16 16"><path d="M3 1.500h7l3 3v10H3z" fill="#fff" stroke="#333" stroke-width="1.400"/><path d="M5 7h6v4H5z" fill="#4f9ac0"/></symbol>
<symbol id="t-start" viewBox="0 0 36 36"><circle cx="18" cy="18" r="17" fill="url(#sky)" stroke="#20394c"/><path d="M9 12c3-2 5-2 8-1l-1 7c-3-1-5-1-8 0z" fill="#e8592c"/><path d="M19 12c3 1 5 1 8-1l-1 7c-3 1-5 1-8 0z" fill="#86c440"/><path d="M8 20c3-1 5-1 8 0l-1 6c-3-1-5-1-8 0z" fill="#3fa0e0"/><path d="M18 20c3 1 5 1 8 0l-1 6c-3 2-5 1-8 0z" fill="#f8cf3c"/><path d="M4 12C8 3 28 3 32 12c-8-4-20-4-28 0z" fill="#fff" opacity=".45"/></symbol>
<symbol id="t-dots" viewBox="0 0 32 32"><path d="M8 2h5v5H8zM14 2h5v5h-5zM20 2h5v5h-5zM2 8h5v5H2zM8 8h5v5H8zM14 8h5v5h-5zM20 8h5v5h-5zM26 8h5v5h-5zM2 14h5v5H2zM8 14h5v5H8zM14 14h5v5h-5zM20 14h5v5h-5zM26 14h5v5h-5zM8 20h5v5H8zM14 20h5v5h-5zM20 20h5v5h-5zM2 26h5v5H2zM8 26h5v5H8z" fill="#2fc4bc" stroke="#083a3c" stroke-width="1.400"/></symbol>
<symbol id="t-chrome" viewBox="0 0 32 32"><circle cx="16" cy="16" r="15" fill="#f7cb3f"/><path d="M16 16L3 8.500A15 15 0 0 1 29 8.500H16z" fill="#db4437"/><path d="M3 8.500A15 15 0 0 0 15 31l6.500-12L10 19z" fill="#2f9e56"/><path d="M29.500 9A15 15 0 0 1 15 31l7-12-1-10z" fill="#f7cb3f"/><circle cx="16" cy="16" r="7" fill="#fff"/><circle cx="16" cy="16" r="5.500" fill="#4a86e8"/></symbol>
<symbol id="t-folder" viewBox="0 0 32 32"><path d="M3 8l3-5h8l2 3h10l3 4v18H1z" fill="#f1d98a" stroke="#c6a14c"/><path d="M5 4h6M15 7h6" stroke="#3d9a5c" stroke-width="2"/><path d="M20 6h6" stroke="#c84a3c" stroke-width="2"/><path d="M1 12h29l-2 17H3z" fill="#fbeeb4" stroke="#d0b060"/><path d="M7 20h18v11h-4v-6H11v6H7z" fill="#8cc8ec" stroke="#5a9cc8"/></symbol>
<symbol id="t-ie" viewBox="0 0 32 32"><path d="M28 19H12c0 6 8 7 10 3h6C25 33 5 32 5 18 5 4 28 2 28 19zM12 14h9c-1-5-8-5-9 0z" fill="#5cc0f2" stroke="#1d84c4"/><path d="M4 30C-2 23 20-2 30 2c2 2 0 6-1 8 1-8-8-4-15 3S3 27 8 29c-2 1-3 2-4 1z" fill="#f6c631" stroke="#c8921c" stroke-width=".7"/></symbol>
<symbol id="t-word" viewBox="0 0 32 32"><path d="M15 5h16v22H15z" fill="#fff" stroke="#2a5699"/><path d="M19 9h9M19 12h9M19 15h9M19 18h9M19 21h9M19 24h9" stroke="#2a5699"/><path d="M0 4l18-3v30L0 28z" fill="#2a5699"/><path d="M4 11l2.500 10L9 12l2.500 9L14 11" fill="none" stroke="#fff" stroke-width="2"/></symbol>
<symbol id="t-flag" viewBox="0 0 16 16"><path d="M2 1v14" stroke="#fff" stroke-width="1.600"/><path d="M3 2h8v7H3z" fill="#fff"/><circle cx="11" cy="11" r="4.500" fill="#d2352a"/><path d="M9 9l4 4M13 9l-4 4" stroke="#fff" stroke-width="1.400"/></symbol>
<symbol id="t-net" viewBox="0 0 16 16"><path d="M4 4h11v8H4zM7 14.500h6M1 1v5h3M1 3h4" fill="none" stroke="#fff" stroke-width="1.600"/></symbol>
<symbol id="t-snd" viewBox="0 0 16 16"><path d="M5 6h2l4-5v14l-4-5H5z" fill="#fff"/></symbol>
</svg>

<main class="doc">
<h1>Lab 5.2</h1>
<p>เปิดข้อมูลที่ต้องการ ดูข้อมูลจาก attribute</p>
<p>นำ Shapefile เข้ามาให้ครบ</p>

<section class="win dark" data-scale="" data-time="14:40">
<div data-part="bars"></div>
<div class="body">
<aside class="toc">
<div data-part="tochead"></div>
<div class="tree">
<div class="row root"><i class="exp minus"></i><svg class="ic"><use href="#i-layers"/></svg><b>Layers</b></div>
<label class="row"><i class="exp minus"></i><input type="checkbox" checked>Stream</label><div class="sym"><i class="ln"></i></div>
<label class="row"><i class="exp minus"></i><input type="checkbox" checked>SubBasin</label><div class="sym"><i class="sw yellow"></i></div>
<label class="row"><i class="exp minus"></i><input type="checkbox" checked>Soil_group</label><div class="sym"><i class="sw purple"></i></div>
<label class="row"><i class="exp minus"></i><input type="checkbox" checked>Rainfall</label><div class="sym"><i class="sw blue"></i></div>
<label class="row"><i class="exp minus"></i><input type="checkbox" checked>irrigation</label><div class="sym"><i class="sw green"></i></div>
</div>
</aside>
<div class="map">
<svg class="canvas" viewBox="0 0 935 627" preserveAspectRatio="xMidYMin slice"><g filter="url(#rough)"><g class="shape" transform="translate(126 -6) scale(.37 .408)"><use href="#basin" fill="#eef3cb"/><use href="#basin-lines" fill="none"/><use href="#coast" fill="none"/></g></g></svg>
<div class="vs"><i class="a up"></i><i class="thumb short"></i><i class="a down"></i></div>
<div data-part="hscroll"></div>
</div>
<div data-part="catalog"></div>
</div>
<div class="status">815562.956&nbsp; 1428450.098 Unknown Units</div>
<div data-part="taskbar"></div>
</section>

<p class="after">คลิกขวา Layer &gt; WGS1984 &gt; Zone 47N</p>

<section class="win light" data-scale="1:683,102" data-time="14:42">
<div data-part="bars"></div>
<div class="body">
<aside class="toc">
<div data-part="tochead"></div>
<div class="tree">
<div class="row root"><i class="exp minus"></i><svg class="ic"><use href="#i-layers"/></svg><b class="hit">Layers</b></div>
<label class="row"><i class="exp minus"></i><input type="checkbox" checked>Stream</label><div class="sym"><i class="ln"></i></div>
<label class="row"><i class="exp minus"></i><input type="checkbox" checked>Soil_group</label><div class="sym"><i class="sw purple"></i></div>
<label class="row"><i class="exp minus"></i><input type="checkbox" checked>irrigation</label><div class="sym"><i class="sw green"></i></div>
<label class="row"><i class="exp minus"></i><input type="checkbox" checked>Rainfall</label><div class="sym"><i class="sw blue"></i></div>
<label class="row"><i class="exp minus"></i><input type="checkbox" checked>SubBasin</label><div class="sym"><i class="sw yellow"></i></div>
</div>
</aside>
<div class="map">
<svg class="canvas" viewBox="0 0 935 627" preserveAspectRatio="xMidYMin slice"><g transform="translate(49 48)" filter="url(#rough)"><g class="shape" transform="translate(126 -6) scale(.37 .408)"><use href="#basin" fill="#ecd3f8"/></g><clipPath id="land"><use href="#basin" transform="translate(126 -6) scale(.37 .408)"/></clipPath><g clip-path="url(#land)"><path d="M175 110h60v200h-50zM340 490h170l-20 40 70 0 30 60-60 10-60-24-50 30-60-60z" fill="url(#soil)"/><path d="M190 150l22 30 10 40 30 20M180 205l30-20M455 490l-8 30 6 30-2 26 12 8 30-12 30 4 12 20M490 510l14 30 20 16 2 24M460 575l-14 30M520 500l40 30 12 20" fill="none" stroke="#b440b8" stroke-width="1.500"/></g><g class="shape" transform="translate(126 -6) scale(.37 .408)"><use href="#coast" fill="none"/></g></g></svg>
<div class="vs"><i class="a up"></i><i class="thumb tall"></i><i class="a down"></i></div>
<div data-part="hscroll"></div>
</div>
<div data-part="catalog"></div>
</div>
<div class="status">753931.367&nbsp; 1449596.421 Meters</div>
<div data-part="taskbar"></div>

<div class="dialog" role="dialog" aria-label="Data Frame Properties">
<div class="dhead"><span>Data Frame Properties</span><button class="dclose" aria-label="Close"><svg class="ic"><use href="#i-x"/></svg></button></div>
<div class="client">
<div class="tabs t1"><button>Feature Cache</button><button>Annotation Groups</button><button>Extent Indicators</button><button>Frame</button><button>Size and Position</button></div>
<div class="tabs t2"><button>General</button><button>Data Frame</button><button class="on">Coordinate System</button><button>Illumination</button><button>Grids</button></div>
<div class="panel">
<div class="find"><button aria-label="Filter"><svg class="ic"><use href="#i-filter"/></svg></button><i class="tri"></i><i class="sep"></i><span class="combo"><input type="text" placeholder="Type here to search" aria-label="Search"></span><button aria-label="Find"><svg class="ic"><use href="#i-find"/></svg></button><button aria-label="Clear"><svg class="ic"><use href="#i-findx"/></svg></button><i class="sep"></i><button aria-label="New"><svg class="ic"><use href="#i-wgsn"/></svg></button><i class="tri"></i><button aria-label="Favourite"><svg class="ic"><use href="#i-star"/></svg></button></div>
<div class="list"><ul data-part="zones"></ul><div class="vs"><i class="a up"></i><i class="thumb tiny"></i><i class="a down"></i></div></div>
<label class="cur" for="cs">Current coordinate system:</label>
<div class="csbox"><textarea id="cs" readonly>WGS_1984_UTM_Zone_47N
WKID: 32647 Authority: EPSG

Projection: Transverse_Mercator
False_Easting: 500000.0
False_Northing: 0.0
Central_Meridian: 99.0
Scale_Factor: 0.9996
Latitude_Of_Origin: 0.0
Linear Unit: Meter (1.0)</textarea><div class="vs"><i class="a up"></i><i class="thumb mid"></i><i class="a down"></i></div></div>
<button class="btn hot wide">Transformations...</button>
</div>
<div class="foot"><button class="btn hot">OK</button><button class="btn">Cancel</button><button class="btn" disabled>Apply</button></div>
</div>
<span class="tip">Close</span>
</div>
</section>
</main>
<script src="app.js"></script>
</body>
</html>
```

FILE: styles.css
```css
* { box-sizing: border-box; }
body { margin: 0; background: #fefefe; color: #000; font-family: Lato, "Noto Sans Thai Looped", "Noto Looped Thai", Loma, Garuda, "Noto Sans Thai", sans-serif; font-variant-ligatures: none; }
button, input, select, textarea { font: inherit; color: inherit; margin: 0; padding: 0; border: 0; background: none; }
i { font-style: normal; display: block; flex: none; }
.defs { position: absolute; width: 0; height: 0; }

.doc { padding: 240px 241px 248px; }
.doc > h1, .doc > p { margin: 0; font-size: 33px; font-weight: 400; white-space: nowrap; }
.doc > h1 { height: 48px; line-height: 48px; text-align: center; margin-bottom: 28px; }
.doc > p { height: 60px; line-height: 60px; margin-bottom: 37px; }
.doc > p.after { margin-top: 32px; }

.win { position: relative; font-family: "Open Sans", "Noto Sans", Loma, Garuda, "Noto Sans Thai", sans-serif; font-size: 11px; line-height: 16px; color: #1a1a1a; background: #f3f2f5; white-space: nowrap; }
.ic { width: 18px; height: 18px; display: block; flex: none; }
.tri { width: 0; height: 0; border: 4px solid transparent; border-top: 5px solid #111; border-bottom: 0; }
.menu .tri, .dd .tri { border-width: 4px 3px 0; }
.sep { width: 1px; height: 18px; background: #b9b9bd; }

/* title bar */
.title { height: 21px; display: flex; align-items: center; gap: 5px; border-bottom: 2px solid #5f6c6c; overflow: hidden; }
.title .cap { flex: 1; }
.title .ic { width: 16px; height: 16px; }
.dark .title { background: radial-gradient(ellipse 30px 16px at 187px 18px, #2a3036 70%, transparent 100%), radial-gradient(ellipse 18px 12px at 256px 16px, #a58a6e 40%, transparent 100%), radial-gradient(ellipse 18px 14px at 346px 20px, #9a4238 40%, transparent 100%), linear-gradient(90deg, #b8bdbb, #a9afad 8%, #7b8785 22%, #788482 88%, #a5acab); }
.light .title { background: radial-gradient(ellipse 30px 16px at 187px 18px, #2a3842 70%, transparent 100%), radial-gradient(ellipse 18px 12px at 256px 16px, #d8b184 40%, transparent 100%), radial-gradient(ellipse 18px 14px at 346px 20px, #b8544a 40%, transparent 100%), linear-gradient(90deg, #b4ccd4, #a3c1cb 20%, #9fc2ce 80%, #b9d3dc); border-bottom-color: #7f959c; }
.caps { display: flex; align-self: flex-start; height: 17px; margin-right: 3px; border: 1px solid #5a6262; border-top: 0; border-radius: 0 0 4px 4px; overflow: hidden; }
.caps button { width: 27px; display: grid; place-items: center; background: linear-gradient(#b9bfbf, #8b9494); border-right: 1px solid #5a6262; }
.caps button:last-child { width: 46px; border: 0; color: #fff; background: linear-gradient(#d98b7c, #c23a22 50%, #c8523a); }
.title .caps .ic { width: 13px; height: 13px; }
.light .caps { border-color: #8aa3ab; }
.light .caps button { background: #b7d0d9; border-color: #8aa3ab; }
.light .caps button:last-child { background: #b7d0d9; color: #5a6c74; }

/* menus and tool bars */
.menus { height: 25px; display: flex; align-items: center; gap: 15px; padding-left: 12px; }
.tbrow { height: 26px; display: flex; align-items: center; padding: 0 0 1px 5px; overflow: hidden; background: linear-gradient(90deg, #f1f0f3, #f8f6f9); }
.tbrow.last { height: 25px; }
.tb { height: 24px; flex: none; display: flex; align-items: center; justify-content: space-between; margin-left: 6px; background: linear-gradient(#fdfdfe, #eeedf0); }
.tb > * { flex: none; }
.tb-std, .tb-tools, .tb-label, .tb-fx { margin-left: 0; }
.tb-std { width: 601px; } .tb-spat { width: 235px; margin-left: 383px; } .tb-adv { width: 336px; }
.tb-tools { width: 511px; } .tb-gps { width: 221px; } .tb-anim { width: 141px; } .tb-draw { width: 670px; }
.tb-label { width: 277px; } .tb-lay { width: 372px; } .tb-na { width: 154px; } .tb-snap { width: 168px; } .tb-edit { width: 363px; } .tb-cons { width: 197px; }
.tb-fx { width: 393px; } .tb-3d { width: 491px; } .tb-topo { width: 179px; margin-left: 161px; }
.tb-ref { width: 142px; margin-left: 432px; } .tb-net { width: 185px; margin-left: 72px; } .tb-geo { width: 555px; }
.grip { width: 2px; height: 18px; background: repeating-linear-gradient(#9a9aa0 0 2px, transparent 2px 4px); }
.ib { width: 20px; height: 20px; display: grid; place-items: center; }
.ib.on { border: 1px solid #4a94dc; background: #dcecfa; }
.ib:disabled { filter: grayscale(1); opacity: .45; }
.dd { width: 8px; height: 18px; display: grid; place-items: center; }
.dd:disabled { opacity: .4; }
.menu { display: flex; align-items: center; gap: 4px; }
.tb b.g { width: 18px; }
.tx { width: 18px; font: bold 15px/18px "Liberation Serif", serif; text-align: center; }
.tx.i { font-style: italic; } .tx.u { text-decoration: underline; }
.tx.bar { border-bottom: 3px solid #000; line-height: 15px; }
.ib.lime { border-bottom: 3px solid #6ee62a; } .ib.pale { border-bottom: 3px solid #eaf2a0; } .ib.blk { border-bottom: 3px solid #000; }
.ib.pale .ic, .ib.blk .ic { width: 16px; height: 16px; }
.dot { width: 6px; height: 6px; border-radius: 50%; background: #1a1a9a; }
.more { align-self: stretch; width: 10px; display: grid; place-items: end center; padding-bottom: 4px; background: linear-gradient(#e6e6e8, #a8a8ac); }
.more::before { content: ""; width: 6px; height: 6px; border-top: 1px solid #111; background: linear-gradient(#111, #111) 0 2px / 6px 2px no-repeat, linear-gradient(#111, #111) 2px 4px / 2px 1px no-repeat; }
.combo { position: relative; display: flex; align-items: center; height: 20px; background: #fff; border: 1px solid #d4d4d8; padding-left: 4px; overflow: hidden; }
.combo select, .combo input { appearance: none; width: 100%; height: 100%; outline: 0; opacity: 1; }
.combo::after { content: ""; position: absolute; right: 5px; border: 4px solid transparent; border-top: 5px solid #111; border-bottom: 0; }
.combo.dis { background: #f0eff1; border-color: #b8b8bc; color: #777; }
.combo.dis::after { border-top-color: #999; }
.combo.sunk { border: 2px solid #77777c; border-right-width: 1px; border-bottom-width: 1px; }
.combo.plain::after { display: none; }
.combo.box { border: 1px solid #555; }
.combo .ic { width: 16px; height: 16px; margin-right: 4px; }
.combo.hl select, .combo.hl1 select { color: #1c5aa0; background: linear-gradient(#3a92f0, #3a92f0) 0 50% / 27px 14px no-repeat; }
.combo.hl1 select { color: #fff; background-size: 7px 14px; }
.w143 { width: 143px; } .w174 { width: 174px; } .w166 { width: 166px; } .w43 { width: 43px; } .w64 { width: 64px; } .w57 { width: 57px; } .w53 { width: 53px; } .w73 { width: 73px; }
.spin { display: grid; gap: 2px; margin-right: 4px; }
.spin i { border: 3px solid transparent; border-top: 4px solid #5a6ab8; border-bottom: 0; }
.spin i:first-child { transform: rotate(180deg); }

/* main area */
.body { display: grid; grid-template-columns: 286px minmax(0, 1fr) 293px 19px; column-gap: 6px; height: 646px; overflow: hidden; }
.toc { display: flex; flex-direction: column; }
.phead { height: 19px; display: flex; align-items: center; gap: 6px; padding: 0 3px 0 4px; color: #4a5a6c; background: linear-gradient(90deg, #c8d4e0, #d3deea); }
.phead span { flex: 1; }
.phead .ic { width: 11px; height: 11px; color: #223; }
.light .toc .phead { background: linear-gradient(90deg, #a9c1dc, #bcd3ea); color: #2a3a4c; }
.ptools { height: 26px; display: flex; align-items: center; gap: 2px; padding: 0 0 2px 3px; background: linear-gradient(#fafafc, #ecebef); }
.ptools .sep { margin: 0 1px; }
.tree { flex: 1; background: #fefefe; border: 1px solid #8a8a90; border-bottom-width: 2px; }
.row { height: 18px; display: flex; align-items: center; gap: 7px; padding-left: 26px; }
.row.root { padding-left: 8px; gap: 4px; }
.row .ic { width: 17px; height: 17px; margin-right: 1px; }
.root .exp { margin-right: 2px; }
.hit { background: #3296f5; color: #fff; }
.row b.hit { padding: 0 2px; margin-left: -2px; }
.row input { appearance: none; width: 11px; height: 11px; border: 1px solid #222; background: #fff; position: relative; margin-right: 1px; flex: none; }
.row input::after { content: ""; position: absolute; left: 3px; top: 0; width: 3px; height: 6px; border: solid #000; border-width: 0 2px 2px 0; transform: rotate(40deg); }
.sym { height: 17px; display: flex; align-items: center; padding-left: 58px; }
.sw { width: 15px; height: 11px; border: 1px solid #85857c; }
.yellow { background: #eef3c4; } .purple { background: #ebcdf8; } .blue { background: #cfe5f8; } .green { background: #cdeed0; }
.ln { width: 13px; height: 1px; background: #b45cb8; }
.exp { width: 9px; height: 9px; border: 1px solid #9a9aa8; background: linear-gradient(#448, #448) 50% 50% / 5px 1px no-repeat, #fafafa; }
.exp.plus { background: linear-gradient(#448, #448) 50% 50% / 5px 1px no-repeat, linear-gradient(#448, #448) 50% 50% / 1px 5px no-repeat, #fafafa; }

.map { display: grid; grid-template-columns: minmax(0, 1fr) 16px; grid-template-rows: 627px 18px; border: 1px solid #77777c; border-width: 1px 0 0 2px; background: #f1f0f3; }
.canvas { width: 100%; height: 627px; background: #fefefe; overflow: hidden; }
.shape { stroke: #74746e; stroke-width: 1; }
#basin, #basin-lines, #coast path { vector-effect: non-scaling-stroke; }
.vs { display: flex; flex-direction: column; align-items: center; padding: 7px 0; background: #f1f0f3; }
.a { width: 0; height: 0; border: 3px solid transparent; }
.a.up { border-bottom: 4px solid #444; border-top: 0; } .a.down { border-top: 4px solid #444; border-bottom: 0; margin-top: auto; }
.a.left { border-right: 4px solid #333; border-left: 0; } .a.right { border-left: 4px solid #333; border-right: 0; }
.thumb { border: 1px solid #a4a4a8; border-radius: 2px; background: repeating-linear-gradient(#777 0 1px, transparent 1px 3px) 50% 50% / 7px 9px no-repeat, linear-gradient(90deg, #f4f4f5, #c9c9cd); }
.vs .thumb { width: 14px; }
.short { height: 40px; margin-top: 31px; }
.tall { height: 592px; margin-top: 4px; }
.hs { grid-column: 1 / -1; display: flex; align-items: center; }
.hs .thumb, .hsc .thumb { height: 13px; background: repeating-linear-gradient(90deg, #777 0 1px, transparent 1px 3px) 50% 50% / 9px 7px no-repeat, linear-gradient(#f4f4f5, #c4c4c8); }
.hs .ic { width: 12px; height: 12px; }
.vb { display: flex; align-items: center; gap: 4px; width: 78px; padding-left: 1px; }
.vb button { display: grid; place-items: center; height: 15px; }
.vb .on { width: 15px; border: 1px solid #777; border-radius: 2px; }
.vb .sep { height: 13px; }
.track { flex: 1; display: flex; padding: 0 7px 0 7px; }
.dark .track { justify-content: flex-end; }
.dark .track .thumb { width: 144px; }
.light .track .thumb { width: 100%; }
.hs .right { margin-right: 20px; }

.cat { display: flex; flex-direction: column; }
.cat .ptools { background: linear-gradient(#e4e8f6, #fbfbfe 40%, #d3d9ea); gap: 3px; }
.cat .ptools .sep { margin: 0 1px; background: #8a8fa0; }
.cat .ptools .dd { width: 9px; }
.loc { height: 23px; display: flex; align-items: center; gap: 9px; padding: 0 4px 0 2px; }
.loc .combo { flex: 1; border-color: #fff; }
.ctree { display: grid; grid-template-columns: minmax(0, 1fr) 16px; height: 538px; background: #fefefe; border: 1px solid #77777c; border-width: 2px 0 0 2px; margin-right: 4px; }
.ctree ul { height: 534px; margin: 0; padding: 0; list-style: none; display: grid; grid-auto-rows: 1fr; overflow: hidden; }
.ctree li { display: flex; align-items: center; gap: 4px; padding-left: 27px; }
.ctree li .ic { width: 16px; height: 16px; margin-left: 3px; }
.ctree small { font-size: 9px; line-height: 11px; }
.ctree li .exp { background-color: #f4f6fb; }
.l1 { margin-left: 19px; } .l2 { margin-left: 38px; } .l3 { margin-left: 57px; }
.exp.none { visibility: hidden; }
.ctree li.cursel span { background: #f0eff1; }
.ctree .thumb { height: 158px; margin-top: 274px; }
.ctree .vs { width: 16px; }
.hsc { height: 17px; display: flex; align-items: center; justify-content: space-between; padding: 0 22px 0 8px; margin-right: 4px; }
.hsc .thumb { width: 128px; margin-right: auto; margin-left: 8px; }
.ctabs { display: flex; padding-left: 3px; margin-top: 3px; }
.ctabs button { display: flex; align-items: center; gap: 4px; height: 20px; padding: 0 4px; border: 1px solid #aaa; border-top: 0; border-radius: 0 0 4px 4px; color: #777; }
.ctabs button.on { background: #fff; color: #111; }
.ctabs .ic { width: 15px; height: 15px; }
.side { display: flex; flex-direction: column; gap: 14px; padding-top: 2px; margin-left: -3px; }
.side button { display: flex; align-items: center; gap: 4px; writing-mode: vertical-rl; width: 22px; padding: 3px 1px 5px; border: 1px solid #a4a4a8; border-right: 0; border-radius: 4px 0 0 4px; font: 12px/16px "Liberation Sans", sans-serif; color: #666; background: #f4f3f5; }
.side button:first-child { height: 78px; }
.side button:last-child { height: 116px; }
.side .ic { width: 15px; height: 15px; }

.status { height: 21px; line-height: 22px; padding-left: calc(100% - 249px); background: #f1f0f3; }

/* task bar */
.taskbar { height: 39px; display: flex; align-items: center; gap: 4px; padding-left: 8px; color: #eee; border-top: 1px solid #444c50; background: linear-gradient(90deg, #636e71, #6d7879 14%, #7a8687 50%, #7e8a8b 80%, #5c676b 88%, #545e63); }
.taskbar button { flex: none; display: grid; place-items: center; }
.start { width: 36px; } .start .ic { width: 36px; height: 36px; }
.taskbar .dots { width: 67px; padding-left: 7px; } .dots .ic { width: 30px; height: 30px; }
.task { width: 57px; height: 37px; border: 1px solid #d2d6d8; border-radius: 3px; background: linear-gradient(160deg, #a3abac, #7c8688 50%, #8c9697); }
.task .ic { width: 31px; height: 31px; }
.task.on { background: linear-gradient(160deg, #e4e7e8, #a9b1b2 60%, #c3c8c9); }
.tray { margin-left: auto; display: flex; align-items: center; align-self: stretch; }
.tray .ic { width: 16px; height: 16px; margin-left: 8px; }
.tray .a { border-bottom: 4px solid #fff; border-top: 0; border-left-width: 4px; border-right-width: 4px; margin: 0 8px 0 15px; }
.clock { width: 66px; margin: 0 1px 0 6px; text-align: center; line-height: 17px; }
.taskbar .desk { width: 14px; align-self: stretch; border: 1px solid #8b9396; background: linear-gradient(90deg, #4b5559, #7d878a); }

/* data frame dialog */
.dialog { position: absolute; left: 546px; top: 113px; width: 475px; padding: 0 4px 6px 6px; border: 1px solid #2c2526; border-radius: 6px; background: linear-gradient(#d9cfd0 0, #b9a3a3 20px, #dcd2d2 70px, #c3b0b2 170px, #a98d98 260px, #b7a2a3 60%, #b9a4a2); box-shadow: 2px 3px 9px 4px rgba(0, 0, 0, .6); }
.dhead { height: 28px; display: flex; align-items: center; justify-content: space-between; }
.dclose { align-self: flex-start; width: 46px; height: 19px; display: grid; place-items: center; color: #fff; border: 1px solid #7a2014; border-top: 0; border-radius: 0 0 4px 4px; background: linear-gradient(#e4846c, #c42c10 50%, #ee7a3c); box-shadow: 0 0 9px 3px #f07058; }
.dclose .ic { width: 12px; height: 12px; }
.client { background: #f3f1f3; border: 1px solid #6c6364; padding: 9px 10px 8px 6px; }
.dialog .tabs, .btn { font: 11px/16px "Liberation Sans", sans-serif; }
.tabs { display: grid; margin: 0 3px 0 1px; }
.t1 { grid-template-columns: 90fr 107fr 98fr 50fr 96fr; }
.t2 { grid-template-columns: 74fr 91fr 127fr 86fr 64fr; }
.tabs button { height: 17px; border: 1px solid #96969c; border-bottom: 0; border-left-width: 0; background: linear-gradient(#f6f6f7, #d9d9dc); overflow: hidden; }
.tabs button:first-child { border-left-width: 1px; }
.tabs .on { background: #fefefe; border-top-color: #fefefe; margin-bottom: -1px; height: 18px; position: relative; }
.panel { height: 499px; display: flex; flex-direction: column; background: #fefefe; border: 1px solid #96969c; padding: 22px 16px 0 23px; }
.find { height: 20px; display: flex; align-items: center; gap: 5px; padding-left: 4px; }
.find .combo { width: 196px; margin: 0 3px 0 4px; }
.find input::placeholder { color: #777; opacity: 1; }
.list, .csbox { display: grid; grid-template-columns: minmax(0, 1fr) 17px; border: 1px solid #8a8a90; overflow: hidden; }
.list { height: 162px; margin-top: 10px; }
.list ul { height: 167px; margin: 0; padding: 1px 0 0 97px; list-style: none; display: grid; grid-auto-rows: 1fr; }
.list .vs { height: 160px; }
.list li { display: flex; align-items: center; gap: 3px; }
.list li .ic { width: 16px; height: 16px; }
.list li span { padding: 0 2px; }
.tiny { height: 16px; margin-top: 88px; background: linear-gradient(90deg, #f4f4f5, #c9c9cd); }
.cur { margin-top: 4px; height: 18px; line-height: 18px; }
.csbox { height: 147px; border-color: #d4d4d8; }
textarea { resize: none; outline: 0; overflow: hidden; font: 11px/13px Lato, sans-serif; padding: 2px 4px; }
.mid { height: 58px; margin-top: 8px; }
.btn { width: 72px; height: 20px; border: 1px solid #77777c; border-radius: 3px; background: linear-gradient(#f4f4f5, #e6e6e8 50%, #cfcfd3); }
.btn.hot { border: 2px solid #3fa9d0; background: linear-gradient(#eaf6fb, #d9eef7 50%, #b9d9e6); line-height: 14px; }
.btn.wide { width: 118px; margin-top: 62px; }
.btn:disabled { color: #999; border-color: #b8b8bc; background: #f3f1f3; }
.foot { display: flex; justify-content: flex-end; gap: 8px; margin: 9px -2px 0 0; }
.tip { position: absolute; left: 449px; top: 28px; height: 18px; padding: 0 2px; border: 1px solid #77777c; background: #fefde8; }
```

FILE: app.js
```js
// Tool bars: "|" separator, "v" drop arrow, "-x" disabled, "*x" pressed, "m:" menu, "s:" combo box, "_" blank slot
const ROWS = [
  [['std', 'new open save print | -cut -copy paste -del | undo -redo | add v | s:w143@scale | *pencil | tbl cat srch tbx py | model'],
   ['spat', 's:w174.dis.sunk: -contour -hist'],
   ['adv', '-line -nodes -mid -cross -tan | -spark -ball | -split -flip -hatch -frames -frames | -hex -hex']],
  [['tools', 'zin zout *hand globe fin fout | back -fwd | sel v -clr | ptr | info -bolt html | meas@ | bino route xy | -time | viewer'],
   ['gps', 'm:GPS | gps -gps2 | -box -box -box | -gps2 _'],
   ['anim', 'm:Animation | cam | anim'],
   ['draw', 'm:Drawing ptr -rot -group | rect v t:A v -nodes | s:w166.font:Cordia~New s:w43:10 t:B t:I.i t:U.u | t:A.bar v c:pale.fill v c:blk.pen v c:lime.dot v']],
  [['label', 'm:Labeling tag1 tag2 tag3 tag4 tag5 tag6 | s:w64.dis:Fast'],
   ['lay', '-page -page -hand -page2 -page3 | -page2 -page2 | -back -fwd s:w57.hl:100% | -page3 -page2 swap stack'],
   ['na', 'm:Network~Analyst | na _'],
   ['snap', 'm:Snapping -circ -plusbox -sq -edge'],
   ['edit', 'm:Editor | -play -play2 | -line -arc -poly -v -spark | -split -split -mid -line -rot | -sheet _'],
   ['cons', '-line -arc -poly -v | -par -tan | -nodes | undo']],
  [['fx', 's:w174.sunk.lay:irrigation -cont -sun swipe -dia | flick | timer n:500'],
   ['3d', 'm:3D~Analyst | s:w174.dis.sunk: -contour -slope -glass -pin3 -poly3 -poly3 | -hist -v | earth | earth2'],
   ['topo', '-wrench -dashx | -dash -dashm -dashx | -dashf -dashz']],
  [['ref', 'ref -ref s:w53.hl1:0 | flag'],
   ['net', '-tri -tplus -tminus | -line | -frames -poly | -nodes'],
   ['geo', 'm:Georeferencing | s:w174.dis: -addpt -wand -addpt -tan -wand -tab -tab -rot -v s:w73.box.plain:']],
];

const icon = (n, p = 'i') => `<svg class="ic" aria-hidden="true"><use href="#${p}-${n}"/></svg>`;
const ICONS_IN_COMBO = ['font', 'lay'];

function combo(classes, text) {
  const list = classes.split('.');
  const glyph = list.find(c => ICONS_IN_COMBO.includes(c));
  return `<span class="combo ${list.join(' ')}">${glyph ? icon(glyph) : ''}<select aria-label="Choice"${list.includes('dis') ? ' disabled' : ''}><option>${text}</option></select></span>`;
}

function item(tok, scale) {
  if (tok === '|') return '<i class="sep"></i>';
  if (tok === '_') return '<b class="g"></b>';
  if (tok === 'v' || tok === '-v') return `<button class="dd" aria-label="More"${tok === '-v' ? ' disabled' : ''}><i class="tri"></i></button>`;
  if (tok === 's:w143@scale') return combo(scale ? 'w143' : 'w143.dis', scale);
  if (tok === 'meas@') tok = scale ? 'meas' : '-meas';
  const [kind, a, b] = tok.split(':');
  const words = s => (s || '').replace(/~/g, ' ');
  if (kind === 'm') return `<button class="menu">${words(a)}<i class="tri"></i></button>`;
  if (kind === 's') return combo(a, words(b));
  if (kind === 'n') return `<span class="combo plain w57"><input type="text" value="${a}" aria-label="Interval"><span class="spin"><i></i><i></i></span></span>`;
  if (kind === 't') { const [t, c] = a.split('.'); return `<button class="tx ${c || ''}">${t}</button>`; }
  if (kind === 'c') {
    const [c, g] = a.split('.');
    const inner = { fill: icon('bucket'), pen: icon('nib'), dot: '<i class="dot"></i>' }[g];
    return `<button class="ib ${c}" aria-label="${g}">${inner}</button>`;
  }
  const name = tok.replace(/^[-*]/, '');
  return `<button class="ib${tok[0] === '*' ? ' on' : ''}" aria-label="${name}"${tok[0] === '-' ? ' disabled' : ''}>${icon(name)}</button>`;
}

function bars(win) {
  const rows = ROWS.map((row, n) => `<div class="tbrow${n === 4 ? ' last' : ''}">` + row.map(([id, items]) =>
    `<div class="tb tb-${id}"><i class="grip"></i>${items.split(' ').map(t => item(t, win.dataset.scale)).join('')}<button class="more" aria-label="Options"></button></div>`).join('') + '</div>').join('');
  const menus = ['File', 'Edit', 'View', 'Bookmarks', 'Insert', 'Selection', 'Geoprocessing', 'Customize', 'Windows', 'Help'];
  return `<div class="title">${icon('app')}<span class="cap">Untitled - ArcMap</span><div class="caps"><button aria-label="Minimize">${icon('min')}</button><button aria-label="Restore">${icon('max')}</button><button aria-label="Close">${icon('x')}</button></div></div>
  <nav class="menus">${menus.map(m => `<button>${m}</button>`).join('')}</nav>${rows}`;
}

const tools = names => names.split(' ').map(n => item(n, '')).join('');
const head = name => `<div class="phead"><span>${name}</span>${icon('pin')}${icon('x')}</div>`;
const tochead = () => head('Table Of Contents') + `<div class="ptools">${tools('*tree src vis selv | opts')}</div>`;

// level, expander, icon, name
const TREE = `0+c D:\\gis2_58670273\\labห้าคุณปี\\KANCHANA
0+c D:\\gis2_58670416
0+c D:\\gis2_58670416\\ChonData_1
0+c D:\\gis2_58670416\\KANCHANABURI
0+c D:\\gis2_58670416\\Lab4
0+c D:\\gis2_58670416\\งานกลุ่ม
0+c D:\\gis256670309
0-c D:\\LUMT
1+f 3301
1-f 3302
2+f LS82017
2+f week3
2+f week5
2+f week6
2+f ขอบเขตจันทบุรี
2 m week5_10.mxd
1-f Data_week6
2-f Drought_Data
3 s irrigation.shp
3 s Rainfall.shp
3 s Soil_group.shp
3 l Stream.shp
3 s SubBasin.shp
1+f ENVI5.3
0+c D:\\LUMT\\3301
0+c D:\\LUMT\\3301\\data
0+c D:\\LUMT\\3301\\week5\\มะขาม
0+c D:\\TopoPhetburi
0+c F:\\
0+c F:\\ChonData_1
0+c F:\\Georeferencing
0+c F:\\GIS 2 Mini Project`.split('\n');
const KINDS = { c: 'foldc', f: 'fold', m: 'mxd', s: 'shp', l: 'shl' };
const EXP = { '+': 'plus', '-': 'minus', ' ': 'none' };
const thai = s => s.replace(/[\u0e00-\u0e7f]+/g, '<small>$&</small>');

function catalog() {
  const rows = TREE.map(r => `<li class="${r.endsWith('SubBasin.shp') ? 'cursel' : ''}"><i class="exp ${EXP[r[1]]} l${r[0]}"></i>${icon(KINDS[r[2]])}<span>${thai(r.slice(4))}</span></li>`).join('');
  return `<aside class="cat">${head('Catalog')}<div class="ptools">${tools('yback v gfwd up home dbh | grid -v | conn | ctree | opts')}</div>
  <label class="loc">Location:<span class="combo">${icon('shp')}<select><option>SubBasin.shp</option></select></span></label>
  <div class="ctree"><ul>${rows}</ul><div class="vs"><i class="a up"></i><i class="thumb"></i><i class="a down"></i></div></div>
  <div class="hsc"><i class="a left"></i><i class="thumb"></i><i class="a right"></i></div>
  <div class="ctabs"><button>${icon('tbx')}ArcToolbox</button><button class="on">${icon('cat')}Catalog</button></div></aside>
  <div class="side"><button>${icon('attr')}Attributes</button><button>${icon('cre')}Create Features</button></div>`;
}

const hscroll = () => `<div class="hs"><div class="vb"><button class="on" aria-label="Data view">${icon('dv')}</button><button aria-label="Layout view">${icon('lv')}</button><i class="sep"></i><button aria-label="Refresh">${icon('refresh')}</button><button aria-label="Pause">${icon('pause')}</button></div><i class="a left"></i><div class="track"><i class="thumb"></i></div><i class="a right"></i></div>`;

const taskbar = win => `<div class="taskbar"><button class="start" aria-label="Start">${icon('start', 't')}</button><button class="dots" aria-label="Launcher">${icon('dots', 't')}</button>
${['chrome', 'folder', 'ie', 'word'].map(n => `<button class="task" aria-label="${n}">${icon(n, 't')}</button>`).join('')}<button class="task on" aria-label="ArcMap">${icon('app')}</button>
<div class="tray"><span>EN</span><i class="a"></i>${icon('flag', 't')}${icon('net', 't')}${icon('snd', 't')}<div class="clock">${win.dataset.time}<br>3/7/2560</div><button class="desk" aria-label="Show desktop"></button></div></div>`;

const zones = () => [3, 40, 41, 42, 43, 44, 45, 46, 47, 48].map(z => `<li>${icon('wgs')}<span class="${z === 47 ? 'hit' : ''}">WGS 1984 UTM Zone ${z}N</span></li>`).join('');

const PARTS = { bars, tochead, catalog, hscroll, taskbar };
document.querySelectorAll('.win').forEach(win => {
  win.querySelectorAll('[data-part]').forEach(el => {
    if (el.dataset.part === 'zones') el.innerHTML = zones();
    else el.outerHTML = PARTS[el.dataset.part](win);
  });
});
```
